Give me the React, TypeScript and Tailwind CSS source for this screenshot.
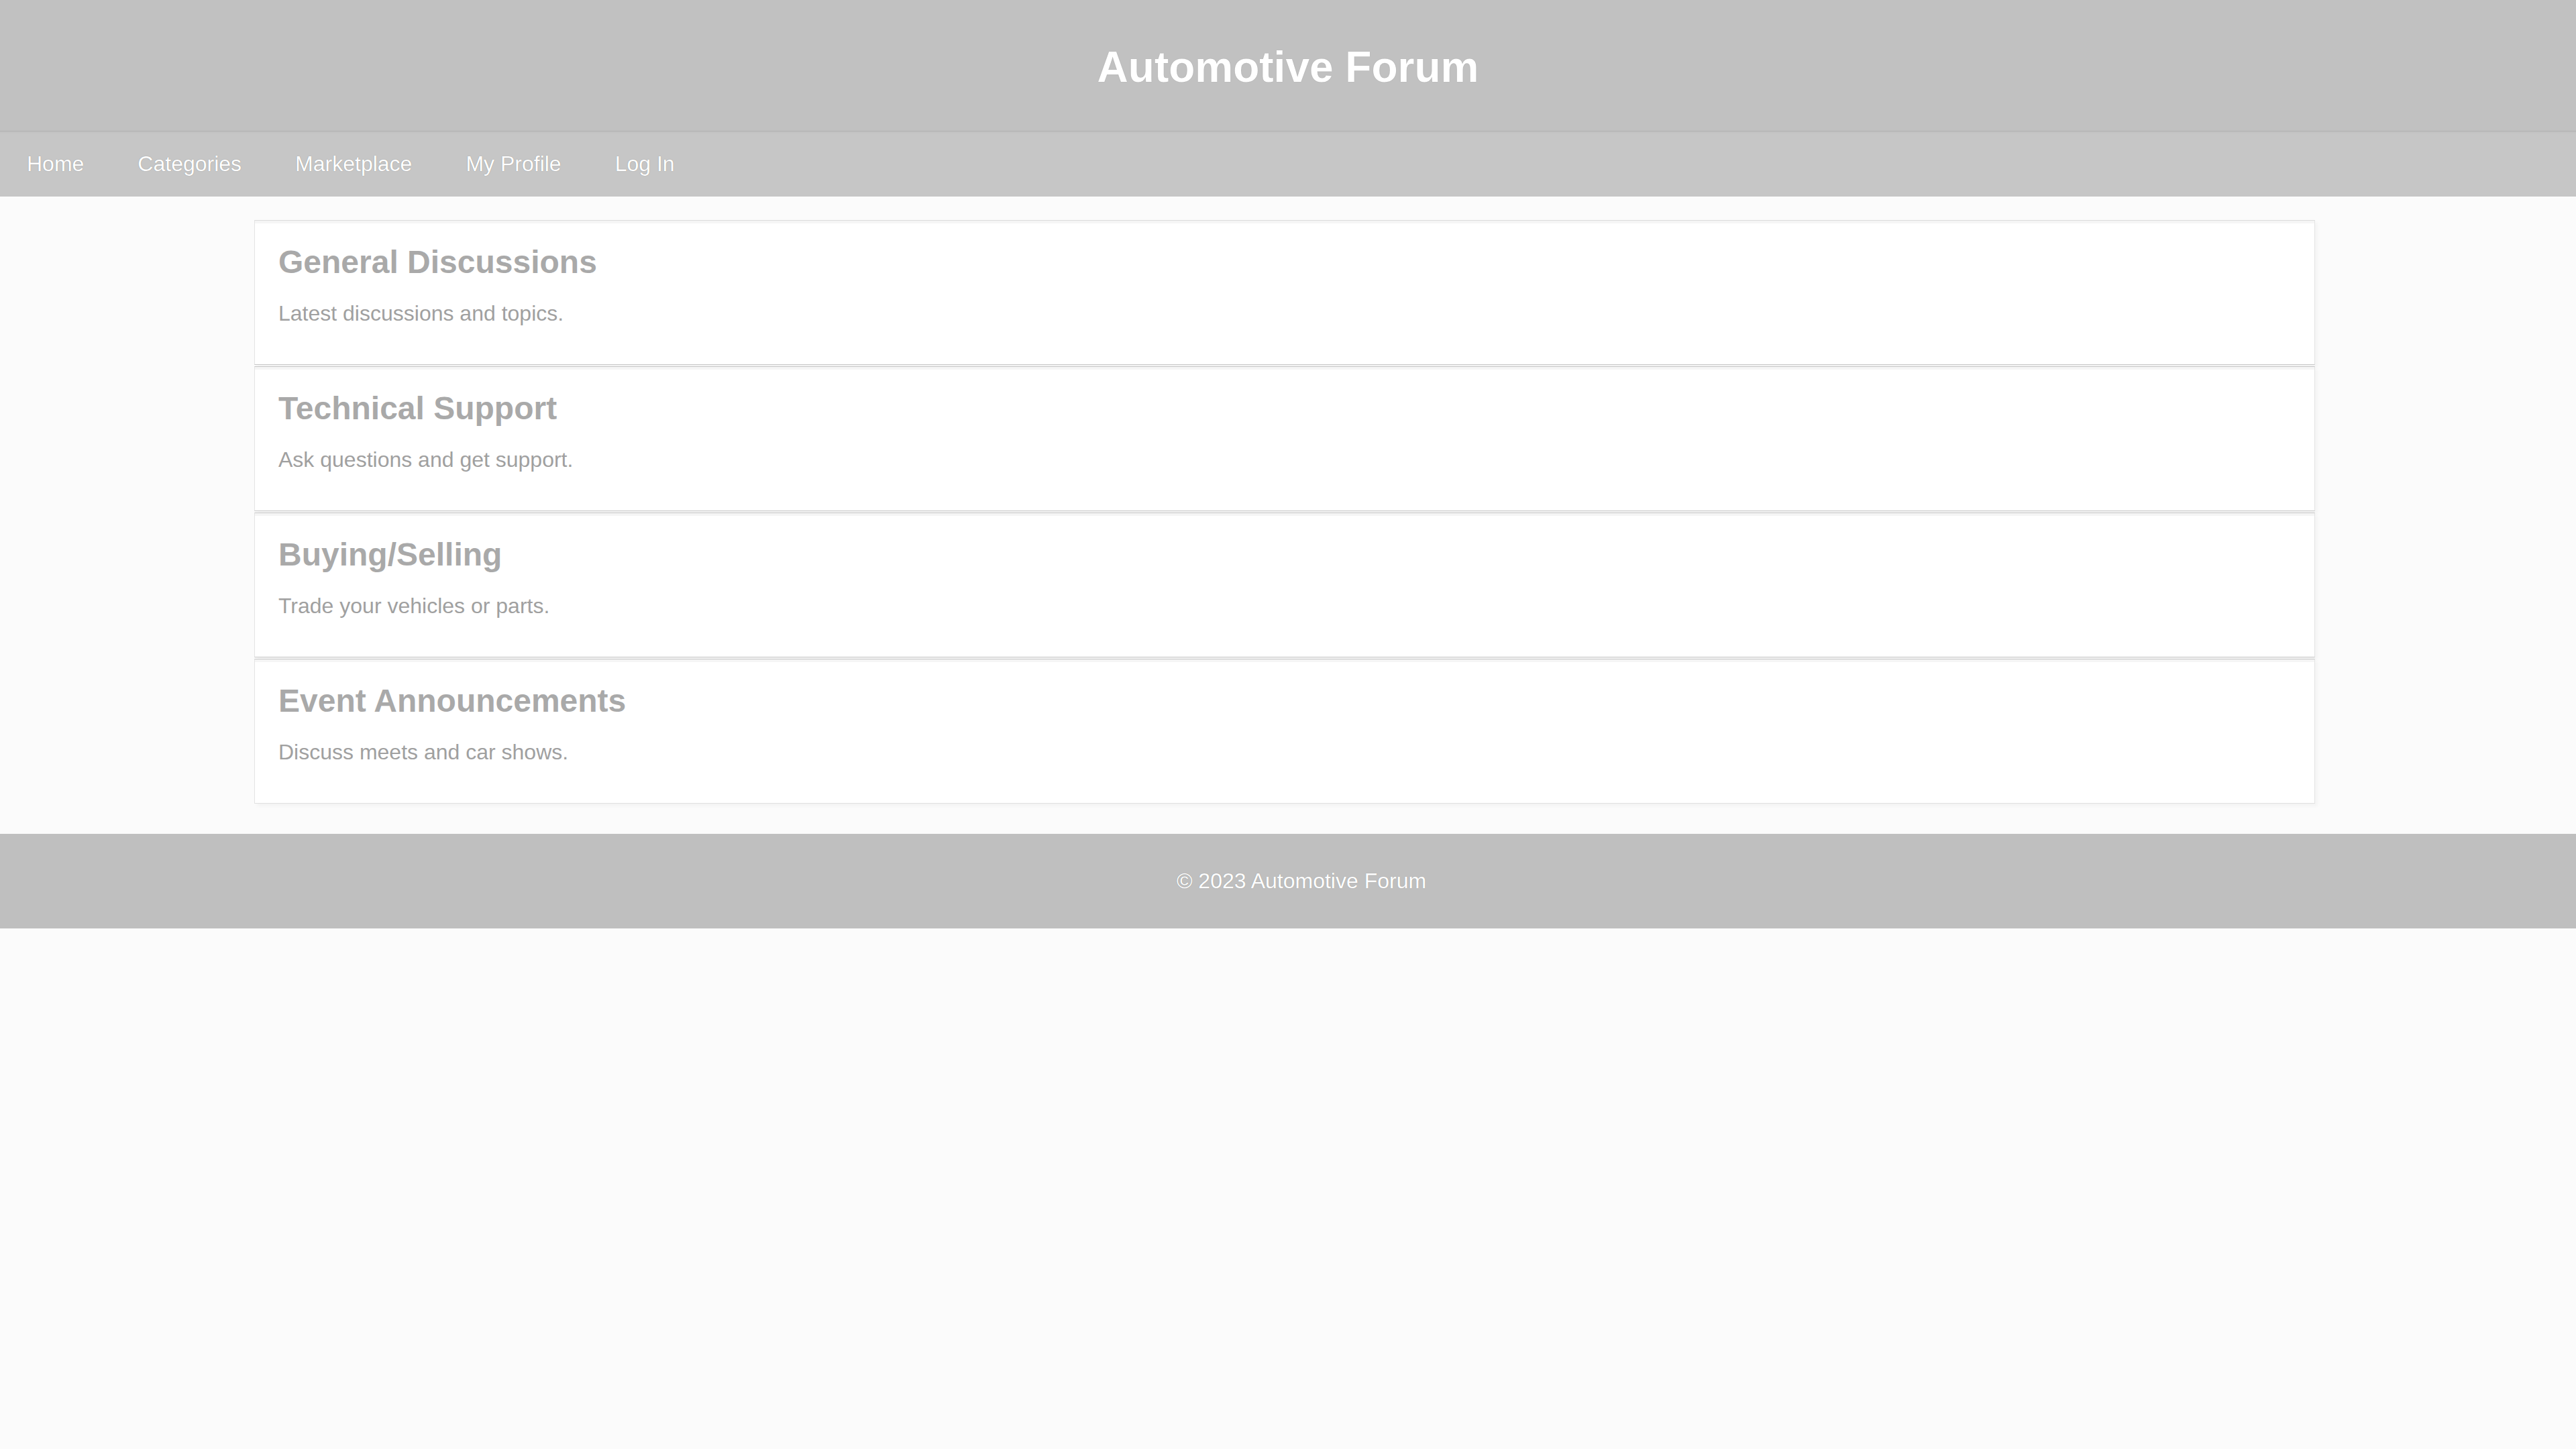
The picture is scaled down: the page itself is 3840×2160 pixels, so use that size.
const navLinks = ['Home', 'Categories', 'Marketplace', 'My Profile', 'Log In'];

const categories = [
  { title: 'General Discussions', desc: 'Latest discussions and topics.' },
  { title: 'Technical Support', desc: 'Ask questions and get support.' },
  { title: 'Buying/Selling', desc: 'Trade your vehicles or parts.' },
  { title: 'Event Announcements', desc: 'Discuss meets and car shows.' },
];

export default function App() {
  return (
    <div
      className="min-h-screen bg-[#fbfbfb]"
      style={{ fontFamily: '"Liberation Sans", Arial, sans-serif' }}
    >
      {/* header */}
      <header className="h-[196px] pt-[4px] bg-[#c1c1c1] border-b border-[#b2b2b2] flex items-center justify-center">
        <h1 className="text-[64px] leading-[64px] font-bold text-white [text-shadow:0_0_1px_rgba(0,0,0,0.25)]">
          Automotive Forum
        </h1>
      </header>

      {/* nav */}
      <nav className="h-[97px] bg-[#c6c6c6] shadow-[inset_0_4px_2px_-2px_rgba(0,0,0,0.03)] flex items-center">
        {navLinks.map((link) => (
          <a
            key={link}
            href="#"
            className="px-[40px] text-[32px] leading-[37px] text-white [text-shadow:0_0_1px_rgba(0,0,0,0.4)]"
          >
            {link}
          </a>
        ))}
      </nav>

      {/* categories */}
      <main className="pt-[35px] pb-[45px]">
        <div className="w-[3072px] ml-[379px] flex flex-col gap-[2px]">
          {categories.map((cat, i) => (
            <section
              key={cat.title}
              className={`bg-white border-x border-[#e4e4e4] pl-[35px] pt-[34px] pb-[58px] shadow-[inset_0_4px_0_#f5f5f5,4px_4px_5px_rgba(0,0,0,0.03)]
                ${i === 0 ? 'border-t border-t-[#dcdcdc]' : 'border-t border-t-[#c6c6c6]'}
                ${i === categories.length - 1 ? 'border-b border-b-[#e0e0e0]' : 'border-b border-b-[#c6c6c6]'}`}
            >
              <h3 className="text-[48px] leading-[55px] font-bold text-[#a9a9a9]">{cat.title}</h3>
              <p className="mt-[31px] text-[32px] leading-[36px] text-[#a0a0a0]">{cat.desc}</p>
            </section>
          ))}
        </div>
      </main>

      {/* footer */}
      <footer className="h-[141px] bg-[#bfbfbf] flex items-center justify-center pl-[40px]">
        <p className="text-[32px] leading-[37px] text-white [text-shadow:0_0_1px_rgba(0,0,0,0.3)]">
          © 2023 Automotive Forum
        </p>
      </footer>
    </div>
  );
}
